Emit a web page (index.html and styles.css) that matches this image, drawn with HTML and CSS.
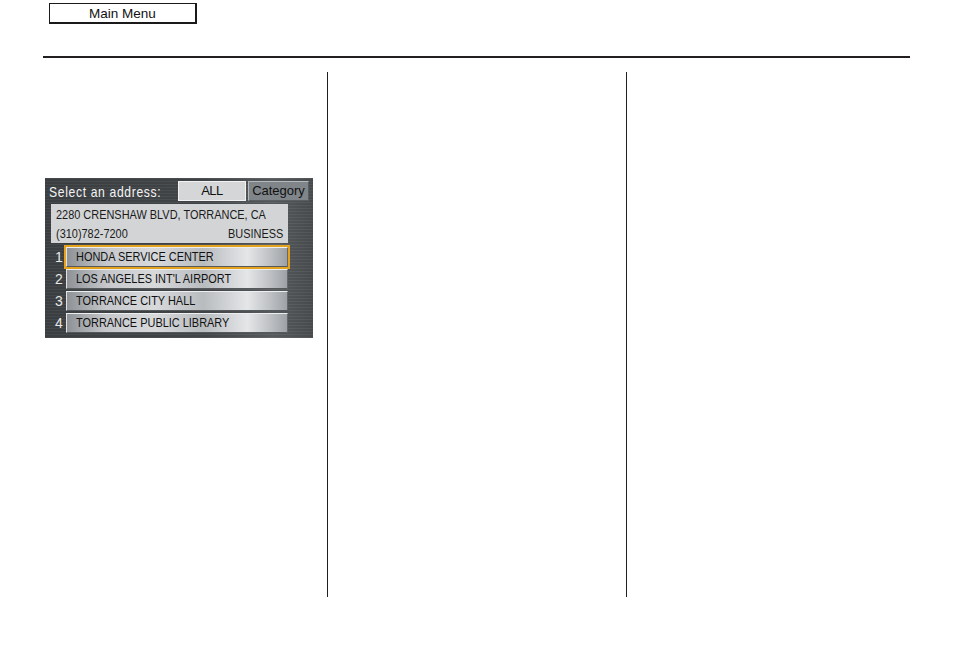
FILE: index.html
```html
<!DOCTYPE html>
<html>
<head>
<meta charset="utf-8">
<link rel="stylesheet" href="styles.css">
</head>
<body>
<div class="page">
  <div class="top">
    <div class="main-menu">Main Menu</div>
  </div>
  <div class="rule"></div>
  <div class="columns">
    <div class="col col1">
      <div class="screen">
        <div class="title-row">
          <span class="title"><span class="sx">Select an address:</span></span>
          <span class="btn btn-all">ALL</span>
          <span class="btn btn-cat">Category</span>
        </div>
        <div class="addr">
          <div class="addr-line"><span class="sx">2280 CRENSHAW BLVD, TORRANCE, CA</span></div>
          <div class="addr-line addr-split"><span class="sx">(310)782-7200</span><span class="sx sx-right">BUSINESS</span></div>
        </div>
        <div class="list">
          <div class="row selected"><span class="num">1</span><span class="item"><span class="sx">HONDA SERVICE CENTER</span></span></div>
          <div class="row"><span class="num">2</span><span class="item"><span class="sx">LOS ANGELES INT'L AIRPORT</span></span></div>
          <div class="row"><span class="num">3</span><span class="item"><span class="sx">TORRANCE CITY HALL</span></span></div>
          <div class="row"><span class="num">4</span><span class="item"><span class="sx">TORRANCE PUBLIC LIBRARY</span></span></div>
        </div>
      </div>
    </div>
    <div class="col col2"></div>
    <div class="col col3"></div>
  </div>
</div>
</body>
</html>
```

FILE: styles.css
```css
* { box-sizing: border-box; }
html, body { margin: 0; padding: 0; background: #fff; }
body { font-family: "Liberation Sans", Arial, sans-serif; width: 954px; height: 652px; overflow: hidden; }

.top { padding: 3px 0 0 49px; height: 56px; }
.main-menu {
  width: 148px; height: 21px;
  border: 1px solid #1a1a1a;
  border-right-width: 2px; border-bottom-width: 2px;
  font-size: 13.5px; line-height: 20px; text-align: center; color: #111;
}
.rule { margin-left: 43px; width: 867px; height: 2px; background: #231f20; }

.columns { display: flex; margin-left: 43px; margin-top: 14px; height: 525px; }
.col { height: 525px; }
.col1 { width: 285px; border-right: 1px solid #231f20; padding: 106px 0 0 2px; }
.col2 { width: 299px; border-right: 1px solid #231f20; }
.col3 { flex: 1; }

.screen {
  width: 268px; height: 160px;
  background:
    repeating-linear-gradient(to bottom, rgba(255,255,255,0.04) 0 1px, rgba(0,0,0,0.05) 1px 3px),
    linear-gradient(to right, #3d4143 0%, #44484b 60%, #5a5e61 85%, #4a4e51 100%);
  padding: 3px 4px 0 3px;
  display: flex; flex-direction: column;
}
.sx { display: inline-block; transform: scaleX(0.81); transform-origin: left center; white-space: nowrap; }
.sx-right { transform-origin: right center; }

.title-row { display: flex; align-items: center; height: 20px; }
.title { color: #f4f4f4; font-size: 15px; letter-spacing: 0.8px; flex: 1 1 0; min-width: 0; padding-top: 1px; padding-left: 1px; white-space: nowrap; }
.btn { height: 20px; font-size: 13px; line-height: 18px; text-align: center; color: #111; white-space: nowrap; }
.btn-all { width: 68px; background: #d4d6d8; border: 1px solid #f2f2f2; margin-right: 2px; letter-spacing: -0.5px; }
.btn-cat { width: 61px; background: #80858a; border: 1px solid #b6b9bc; border-right-color: #5a5e61; border-bottom-color: #5a5e61; font-size: 13px; }

.addr {
  margin: 3px 0 0 3px; width: 237px; height: 39px;
  background: #d3d4d6; color: #1a1a1a;
  padding: 1px 5px 0 5px; font-size: 13.5px; line-height: 19px; white-space: nowrap;
}
.addr-split { display: flex; justify-content: space-between; }

.list { display: flex; flex-direction: column; margin-top: 3px; }
.row { display: flex; align-items: center; height: 22px; }
.num { width: 14px; margin-left: 4px; color: #e8e8e8; font-size: 14px; text-align: center; }
.item {
  width: 222px; height: 20px;
  background: linear-gradient(to right, #8e9296 0%, #c6c8cb 18%, #d7d9db 40%, #b9bcbf 62%, #e4e6e8 82%, #bfc2c5 92%, #9ea2a6 100%);
  border-top: 1px solid #eceeef; border-left: 1px solid #e0e2e3;
  border-bottom: 1px solid #55595c; border-right: 1px solid #66696c;
  color: #111; font-size: 13.5px; line-height: 18px; padding-left: 9px;
  white-space: nowrap;
}
.row.selected .item { outline: 2px solid #e5a21c; outline-offset: 0px; }
```
